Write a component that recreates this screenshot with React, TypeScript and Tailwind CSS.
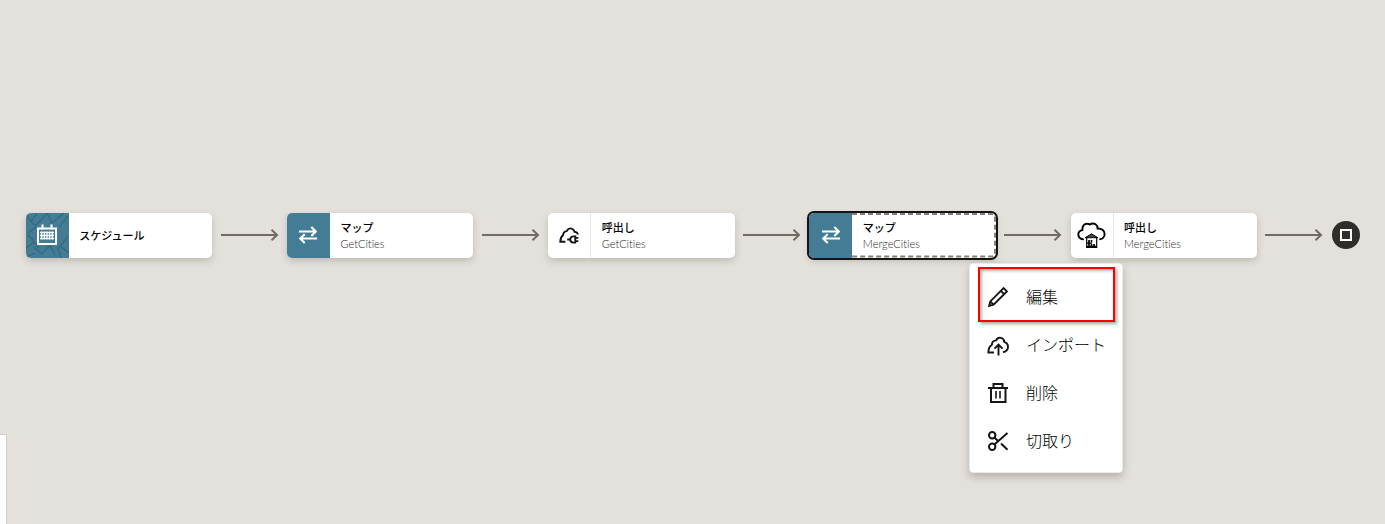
import type { ReactNode } from "react";

function CalendarIcon() {
  return (
    <svg width="22" height="22" viewBox="0 0 22 22" fill="none" stroke="#fff">
      <path d="M2 4.5h18v15.5H2z" strokeWidth="2" />
      <path d="M6.5 0.5v5M15.5 0.5v5" strokeWidth="2.2" />
      <path d="M4 8.5h14M4 11.5h14M4 14.5h14" strokeWidth="1.5" />
      <path d="M5.7 7.5v8M8.4 7.5v8M11 7.5v8M13.6 7.5v8M16.3 7.5v8" strokeWidth="1.2" />
    </svg>
  );
}

function SwapIcon() {
  return (
    <svg width="20" height="18" viewBox="0 0 20 18" fill="none" stroke="#fff" strokeWidth="2.1">
      <path d="M1 5.5h17M13.3 1l4.500 4.500-4.500 4.500" />
      <path d="M19 12.500H2M6.700 8.200L2.200 12.500l4.500 4.500" />
    </svg>
  );
}

function CloudPlugIcon() {
  return (
    <svg width="22" height="19" viewBox="0 0 22 19" fill="none" stroke="#161513" strokeWidth="1.9">
      <path d="M7.400 15.700H2.300C2.300 12.700 3 10.800 5 9.300c.2-2.500 1.300-4 3.700-4.200C10 2.700 11.800 2 13.700 2.600c1.500.5 2.500 1.500 2.800 3.200 2.200.3 3.200 1.200 3.300 2.700" />
      <path d="M9.200 13.500h3M17.300 10.400h-1.600c-2.300 0-3.500 1.100-3.500 3.100s1.200 3.100 3.500 3.100h1.600zM17.300 11.900h3M17.300 15.100h3" />
    </svg>
  );
}

function CloudBuildingIcon() {
  return (
    <svg width="29" height="28" viewBox="0 0 29 28" fill="none" stroke="#000">
      <path d="M6.800 18.400C3.600 18.400 1.300 16.400 1.300 13.600c0-2.500 1.800-4.200 4.100-4.500C5 5 7.200 2.600 10.300 2.700c1 0 1.900.3 2.700.9 1.600-1.300 3.900-1.400 5.500-.3 1.500 1 2.200 2.500 2.100 4.200 3.700-.3 7 2 7 5.500 0 3.100-2.200 5.300-5.300 5.400" strokeWidth="1.900" />
      <path d="M8.200 16.700l6.300-3.900 6.300 3.900z" fill="#444" strokeWidth="1" />
      <path d="M9.700 16.500v9.800h10v-9.800" strokeWidth="1.200" />
      <path d="M12 19v7M14.500 19v2.500M14.500 23v3M17 23v3" strokeWidth="1.700" />
      <path d="M10 22.200h5M10 25.500h9" strokeWidth="1.300" />
    </svg>
  );
}

function PencilIcon() {
  return (
    <svg width="24" height="24" viewBox="0 0 24 24" fill="none" stroke="#161513" strokeWidth="1.900">
      <path d="M3.100 20.900l1.200-4.500L17.600 3.100l3.300 3.300L7.600 19.700zM14.800 5.900l3.300 3.300M4.300 16.400l3.300 3.300" />
    </svg>
  );
}

function CloudUploadIcon() {
  return (
    <svg width="24" height="24" viewBox="0 0 24 24" fill="none" stroke="#161513" strokeWidth="1.900">
      <path d="M8 19.500H2.400c0-3.700.8-6 3.500-7.700.1-2.600 1.500-4.300 4.200-4.400 1-2.100 2.800-3.100 5-2.500 2.100.5 3.100 1.900 3.200 4 2.400.8 3.700 2.600 3.700 4.900 0 2.800-1.900 4.800-5 5.500" />
      <path d="M12.500 22.500V12M8.500 15.600l4-4 4 4" />
    </svg>
  );
}

function TrashIcon() {
  return (
    <svg width="24" height="24" viewBox="0 0 24 24" fill="none" stroke="#161513">
      <path d="M2 7h20M5 7v14h14.500V7M7.500 7V3h9V7" strokeWidth="2" />
      <path d="M10 10v7.500M14 10v7.500" strokeWidth="1.600" />
    </svg>
  );
}

function ScissorsIcon() {
  return (
    <svg width="24" height="24" viewBox="0 0 24 24" fill="none" stroke="#161513" strokeWidth="2">
      <circle cx="6.200" cy="6.200" r="3.200" />
      <circle cx="6.200" cy="17.800" r="3.200" />
      <path d="M8.400 15.500L21.500 4M8.400 8.600l4 3.700M15 14.500l6.500 6.200" />
    </svg>
  );
}

function LeafTexture() {
  return (
    <svg className="absolute inset-0" width="43" height="45" viewBox="0 0 43 45" fill="none" stroke="#2f677e" strokeWidth="1.100">
      <path d="M0 1l8 11M11 0L5 9M9 13L17 5l4-5M2 20l8-6M0 35l8-6 5 6M8 28L2 22M16 41l8-9 5 10M21 0l5 10M26 10L38 0M33 14l9-11M16 41l-8-7M35 45l-3-9M32 36l10-13M34 33l9 7M0 44l9-4" />
    </svg>
  );
}

function Connector() {
  return (
    <div className="flex w-[74.700px] shrink-0 justify-center">
      <svg width="58" height="14" viewBox="0 0 58 14" fill="none" stroke="#716b65">
        <path d="M0 7h56" strokeWidth="2.200" />
        <path d="M50.500 1.800L56 7l-5.500 5.200" strokeWidth="2" />
      </svg>
    </div>
  );
}

interface NodeProps {
  icon: ReactNode;
  title: string;
  subtitle?: string;
  filled?: boolean;
  textured?: boolean;
  selected?: boolean;
}

function FlowNode({ icon, title, subtitle, filled, textured, selected }: NodeProps) {
  return (
    <div
      className={`relative flex h-[44.500px] w-[186.500px] shrink-0 rounded-[5px] bg-white shadow-[0_3px_7px_rgba(60,50,40,0.220)] ${
        selected ? "outline-2 outline-offset-[0.5px] outline-[#161513]" : ""
      }`}
    >
      <div
        className={`relative flex w-[43px] shrink-0 items-center justify-center overflow-hidden rounded-l-[5px] ${
          filled ? "bg-[#437c94]" : "border-r border-[#e8e6e3]"
        }`}
      >
        {textured && <LeafTexture />}
        <div className="relative">{icon}</div>
      </div>
      <div className="flex flex-col justify-center pt-[2px] pl-[10.500px]">
        <div className="text-[11px] leading-[16px] font-medium whitespace-nowrap text-black">{title}</div>
        {subtitle && (
          <div className="text-[11px] leading-[16px] font-light whitespace-nowrap text-[#2b2825] [font-variant-ligatures:none]">
            {subtitle}
          </div>
        )}
      </div>
      {selected && (
        <svg className="absolute top-0 left-[43px]" width="144" height="45" fill="none">
          <path d="M0 1H139Q143 1 143 5V39.500Q143 43.500 139 43.500H0" stroke="#85817d" strokeWidth="2" strokeDasharray="5 3" />
        </svg>
      )}
    </div>
  );
}

const menuItems = [
  { label: "編集", icon: <PencilIcon /> },
  { label: "インポート", icon: <CloudUploadIcon /> },
  { label: "削除", icon: <TrashIcon /> },
  { label: "切取り", icon: <ScissorsIcon /> },
];

function ContextMenu() {
  return (
    <div className="absolute top-[263px] left-[969px] h-[210px] w-[154px] rounded-[4px] border border-[#eceae7] bg-white pt-[9px] shadow-[0_4px_8px_rgba(60,50,40,0.280)]">
      {menuItems.map((item) => (
        <div key={item.label} className="flex h-12 items-center gap-4 pl-4">
          {item.icon}
          <span className="text-[16px] leading-6 font-light whitespace-nowrap text-black">{item.label}</span>
        </div>
      ))}
      <div className="absolute top-[3px] left-[8px] h-[55px] w-[137px] border-2 border-[#fb0000] shadow-[2px_2px_3px_rgba(0,0,0,0.350),inset_2px_2px_3px_rgba(0,0,0,0.300)]" />
    </div>
  );
}

export default function App() {
  return (
    <div className="relative h-[524px] w-[1385px] overflow-hidden bg-[#e4e1dc] font-[Lato,'Noto_Sans_CJK_JP',sans-serif]">
      <div className="flex items-center pt-[213px] pl-[25.800px]">
        <FlowNode icon={<CalendarIcon />} title="スケジュール" filled textured />
        <Connector />
        <FlowNode icon={<SwapIcon />} title="マップ" subtitle="GetCities" filled />
        <Connector />
        <FlowNode icon={<CloudPlugIcon />} title="呼出し" subtitle="GetCities" />
        <Connector />
        <FlowNode icon={<SwapIcon />} title="マップ" subtitle="MergeCities" filled selected />
        <Connector />
        <FlowNode icon={<CloudBuildingIcon />} title="呼出し" subtitle="MergeCities" />
        <Connector />
        <div className="flex size-[28px] shrink-0 items-center justify-center rounded-full bg-[#312d2a]">
          <div className="size-[12px] border-2 border-white" />
        </div>
      </div>
      <ContextMenu />
      <div className="absolute bottom-0 left-0 h-[90px] w-[7px] border-t border-r border-[#d0ccc7] bg-white" />
    </div>
  );
}
